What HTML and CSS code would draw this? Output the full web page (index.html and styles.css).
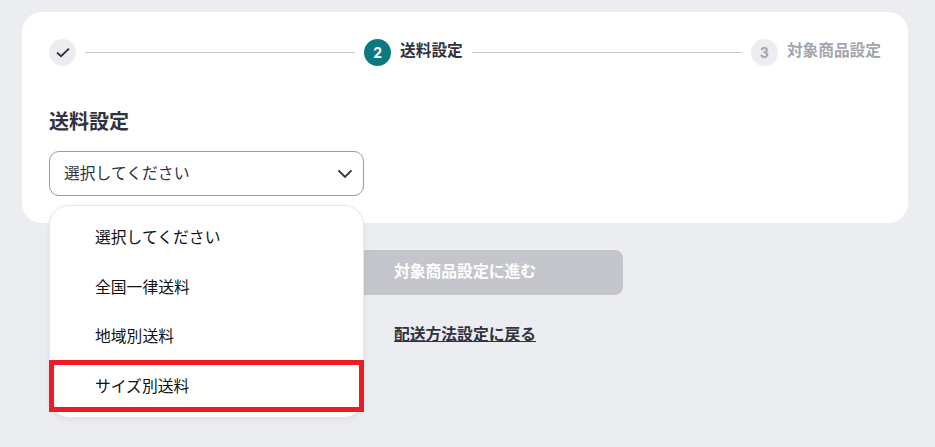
FILE: index.html
```html
<!DOCTYPE html>
<html lang="ja">
<head>
    <meta charset="UTF-8">
    <title>送料設定</title>
    <link rel="stylesheet" href="styles.css">
</head>
<body>
    <div class="card">
        <div class="stepper">
            <span class="step-circle">
                <svg width="14" height="11" viewBox="0 0 14 11"><path d="M1 5.6 L5 9.2 L13 1.6" fill="none" stroke="#2f3240" stroke-width="1.9"/></svg>
            </span>
            <span class="step-line"></span>
            <span class="step-circle current">2</span>
            <span class="step-label">送料設定</span>
            <span class="step-line"></span>
            <span class="step-circle todo">3</span>
            <span class="step-label todo">対象商品設定</span>
        </div>

        <h2 class="title">送料設定</h2>

        <div class="select">
            <span class="select-text">選択してください</span>
            <svg width="16" height="10" viewBox="0 0 16 10"><path d="M1.5 1.4 L8 7.9 L14.5 1.4" fill="none" stroke="#2f3240" stroke-width="1.9"/></svg>
        </div>

        <ul class="dropdown">
            <li>選択してください</li>
            <li>全国一律送料</li>
            <li>地域別送料</li>
            <li>サイズ別送料</li>
            <li class="highlight"></li>
        </ul>
    </div>

    <div class="actions">
        <button class="next-button">対象商品設定に進む</button>
        <a class="back-link" href="#">配送方法設定に戻る</a>
    </div>
</body>
</html>
```

FILE: styles.css
```css
html {
    height: 100%;
}
body {
    box-sizing: border-box;
    min-height: 447px;
    margin: 0;
    padding: 12px 27px 0 22px;
    background-color: #ecedf1;
    font-family: "Noto Sans CJK JP", "Noto Sans", sans-serif;
    color: #2f3240;
}
.card {
    position: relative;
    background-color: #fff;
    border-radius: 20px;
    padding: 27px;
}
.stepper {
    display: flex;
    align-items: center;
    gap: 9px;
}
.step-circle {
    flex: none;
    width: 27px;
    height: 27px;
    border-radius: 50%;
    background-color: #ecedf1;
    display: flex;
    align-items: center;
    justify-content: center;
    font-family: "Inter", sans-serif;
    font-size: 14px;
    font-weight: 700;
}
.step-circle.current {
    background-color: #0b7a80;
    color: #fff;
}
.step-circle.todo {
    color: #a3a5ae;
}
.step-line {
    flex: 1;
    height: 1px;
    background-color: #c5c6cb;
}
.step-label {
    font-size: 15.7px;
    font-weight: 700;
    line-height: 20px;
    padding-bottom: 6px;
}
.step-label.todo {
    color: #a3a5ae;
}
.title {
    margin: 40px 0 15px;
    font-size: 20px;
    font-weight: 700;
    line-height: 30px;
}
.select {
    box-sizing: border-box;
    width: 315px;
    height: 45px;
    border: 1px solid #9a9ba2;
    border-radius: 10px;
    padding: 0 10px 0 14px;
    display: flex;
    align-items: center;
    justify-content: space-between;
    font-size: 15.8px;
}
.select-text {
    padding-bottom: 3px;
}
.dropdown {
    position: absolute;
    left: 27px;
    top: 193px;
    box-sizing: border-box;
    width: 315px;
    height: 213px;
    margin: 0;
    padding: 6px 0 0;
    list-style: none;
    background-color: #fff;
    border: 1px solid #e6e6e9;
    border-radius: 20px;
    box-shadow: 0 2px 6px rgba(0, 0, 0, 0.06);
    color: #111;
    font-size: 15.8px;
}
.dropdown li {
    height: 49.6px;
    line-height: 49.6px;
    padding-left: 45px;
}
.dropdown li.highlight {
    position: absolute;
    left: -1px;
    top: 154px;
    box-sizing: border-box;
    width: 315px;
    height: 52px;
    padding: 0;
    border: 5px solid #ed1c24;
}
.actions {
    margin-top: 27px;
    display: flex;
    flex-direction: column;
    align-items: center;
}
.next-button {
    width: 316px;
    height: 45px;
    border: 0;
    border-radius: 8px;
    padding: 0 0 5px;
    background-color: #c5c6cb;
    color: #fff;
    font-family: inherit;
    font-size: 15.8px;
    font-weight: 700;
}
.back-link {
    margin-top: 27px;
    font-size: 15.8px;
    font-weight: 700;
    line-height: 24px;
    color: #2f3240;
}
```
